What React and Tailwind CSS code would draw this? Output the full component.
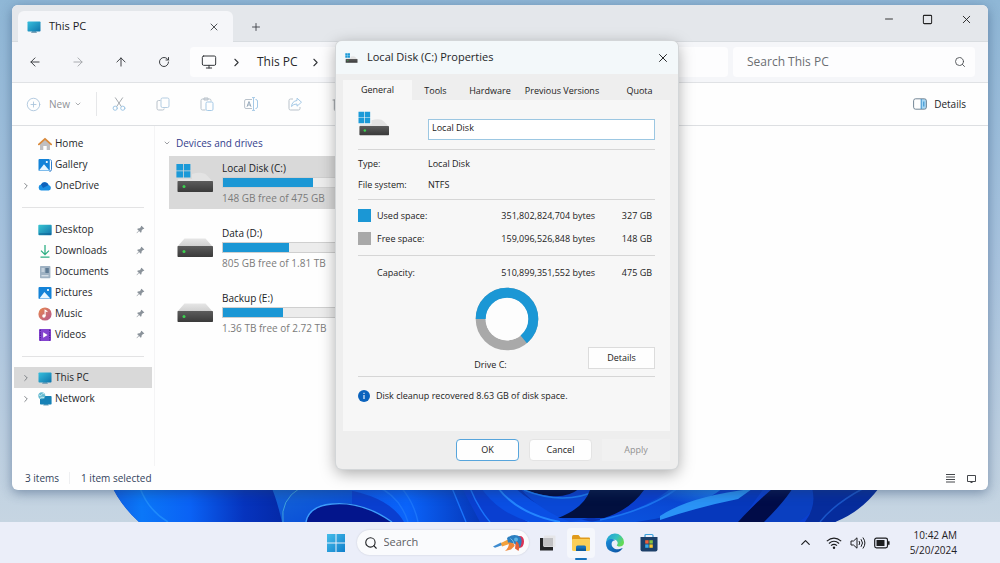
import React from "react";
import {
  ArrowLeft, ArrowRight, ArrowUp, RotateCw, Monitor, ChevronRight, ChevronDown, ChevronUp,
  Plus, X, Minus, Square, Search, CirclePlus, Trash2,
} from "lucide-react";

/* ---------- icons ---------- */

function PcIcon({ className }) {
  return (
    <svg viewBox="0 0 14 14" className={className} aria-hidden="true">
      <defs>
        <linearGradient id="pc" x1="0" y1="0" x2="1" y2="1">
          <stop offset="0" stopColor="#37bfdd" />
          <stop offset="1" stopColor="#0e74ab" />
        </linearGradient>
      </defs>
      <path d="M5 11h4l1 2H4z" fill="#7fa3b8" />
      <rect x="0.5" y="1.5" width="13" height="10" rx="0.8" fill="url(#pc)" />
    </svg>
  );
}

function HomeIcon({ className }) {
  return (
    <svg viewBox="0 0 14 14" className={className} aria-hidden="true">
      <path d="M2 6.5 7 2.4l5 4.1V13H8.7V9H5.3v4H2z" fill="#c0bfc1" />
      <path d="M0.9 7.4 7 1.8l6.1 5.6" fill="none" stroke="#d98a3c" strokeWidth="1.8" strokeLinejoin="round" strokeLinecap="round" />
    </svg>
  );
}

function PictureIcon({ className, stacked }) {
  return (
    <svg viewBox="0 0 14 14" className={className} aria-hidden="true">
      {stacked && <path d="M12.4 1.6q1.1.4 1.1 1.9v7.8q0 2-2 2.200" fill="none" stroke="#1c6fc4" strokeWidth="0.9" />}
      <rect x="0.5" y="1" width={stacked ? 11.3 : 13} height="12" rx="1" fill="#1483d8" />
      <path d={stacked ? "M1 12.6 6 6.3l5.3 6.3z" : "M1.4 12.6 6.4 6l6 6.6z"} fill="#e8f6ff" />
      <circle cx={stacked ? 8.8 : 10} cy="4" r="1.1" fill="#fff" />
    </svg>
  );
}

function CloudIcon({ className }) {
  return (
    <svg viewBox="0 0 14 14" className={className} aria-hidden="true">
      <path d="M3.4 11.6A3.1 3.1 0 0 1 3 5.5 4.2 4.2 0 0 1 10.6 6a2.9 2.9 0 0 1 .3 5.6z" fill="#1a8fe3" />
      <path d="M3 5.5A4.2 4.2 0 0 1 10.6 6L5 9z" fill="#0f62bb" />
    </svg>
  );
}

function DesktopIcon({ className }) {
  return (
    <svg viewBox="0 0 14 14" className={className} aria-hidden="true">
      <defs>
        <linearGradient id="desk" x1="0" y1="0" x2="1" y2="1">
          <stop offset="0" stopColor="#38c6d2" />
          <stop offset="1" stopColor="#1272ab" />
        </linearGradient>
      </defs>
      <rect x="0.3" y="1.8" width="13.4" height="10.4" rx="0.9" fill="url(#desk)" />
      <path d="M1 11h12" stroke="#0b5788" strokeWidth="0.8" />
    </svg>
  );
}

function DownloadIcon({ className }) {
  return (
    <svg viewBox="0 0 14 14" className={className} fill="none" stroke="#2eaf84" strokeWidth="1.3" aria-hidden="true">
      <path d="M7 1v9.3M3 6.6l4 4 4-4M2.5 13.2h9" />
    </svg>
  );
}

function DocIcon({ className }) {
  return (
    <svg viewBox="0 0 14 14" className={className} aria-hidden="true">
      <rect x="2" y="1" width="10.4" height="12.2" rx="0.8" fill="#9fb2c3" />
      <path d="M3.5 4h3M3.5 6h3M3.5 10.8h7" stroke="#f3f7fa" strokeWidth="0.9" />
      <rect x="7.4" y="3" width="3.4" height="5" fill="#5f7b94" />
    </svg>
  );
}

function MusicIcon({ className }) {
  return (
    <svg viewBox="0 0 14 14" className={className} aria-hidden="true">
      <defs>
        <linearGradient id="music" x1="0" y1="0" x2="1" y2="1">
          <stop offset="0" stopColor="#e8894c" />
          <stop offset="1" stopColor="#b55690" />
        </linearGradient>
      </defs>
      <circle cx="7" cy="7" r="6.6" fill="url(#music)" />
      <circle cx="5.9" cy="9" r="1.7" fill="#fff" />
      <path d="M7.1 9V3.2l2.3 1.5" fill="none" stroke="#fff" strokeWidth="1.1" />
    </svg>
  );
}

function VideoIcon({ className }) {
  return (
    <svg viewBox="0 0 14 14" className={className} aria-hidden="true">
      <rect x="1" y="1" width="12" height="12" rx="1" fill="#8443cf" />
      <path d="M2.4 1.8v10.8M11.6 1.8v10.8" stroke="#4d1f96" strokeWidth="1.2" strokeDasharray="1.3 1.1" />
      <path d="M5.2 4.2 9.6 7l-4.4 2.8z" fill="#fff" />
    </svg>
  );
}

function NetworkIcon({ className }) {
  return (
    <svg viewBox="0 0 14 14" className={className} aria-hidden="true">
      <path d="M6 12h4l.8 1.6H5.2z" fill="#6fa0b8" />
      <rect x="2" y="4" width="11.6" height="8.6" rx="0.8" fill="#1681b6" />
      <circle cx="3.8" cy="3.8" r="3.5" fill="#63b9cf" />
      <path d="M1 3q2 1.6 2.8-.4T6.6 2M2 6.4q1.6-2 4-.9" stroke="#d6f1f6" strokeWidth="0.9" fill="none" />
    </svg>
  );
}

function PinIcon({ className }) {
  return (
    <svg viewBox="0 0 10 10" className={className} aria-hidden="true">
      <path d="M6.1.8 9.3 4l-1 .5-.5-.1-1.6 1.6-.1 1.9-.8.7-1.9-1.9L1 9.2l-.4-.4L3 6.2 1.3 4.6l.7-.8 2-.1 1.5-1.6-.1-.6z" fill="#8b939b" />
    </svg>
  );
}

function WindowsLogo({ className }) {
  return (
    <svg viewBox="0 0 20 20" className={className} aria-hidden="true">
      <defs>
        <linearGradient id="win" x1="0" y1="0" x2="1" y2="1">
          <stop offset="0" stopColor="#45bdea" />
          <stop offset="1" stopColor="#0f7fcb" />
        </linearGradient>
      </defs>
      <path d="M1 1h8.5v8.5H1zM10.5 1H19v8.5h-8.5zM1 10.5h8.5V19H1zM10.5 10.5H19V19h-8.5z" fill="url(#win)" />
    </svg>
  );
}

function DriveIcon({ className, system }) {
  return (
    <svg viewBox="0 0 38 30" className={className} aria-hidden="true">
      <defs>
        <linearGradient id="lid" x1="0" y1="0" x2="0" y2="1">
          <stop offset="0" stopColor="#e6e6e6" />
          <stop offset="1" stopColor="#cfcfcf" />
        </linearGradient>
        <linearGradient id="box" x1="0" y1="0" x2="0" y2="1">
          <stop offset="0" stopColor="#5c5c5c" />
          <stop offset="1" stopColor="#3a3a3a" />
        </linearGradient>
      </defs>
      {system
        ? <path d="M16 11q11-3 15 1.500l5.500 6H2V16h14z" fill="#e3e3e3" />
        : <path d="M8.5 10.500h21l7 8h-35z" fill="url(#lid)" />}
      <rect x="1.5" y="18" width="35.5" height="11" rx="0.8" fill="url(#box)" />
      <circle cx="8" cy="23.4" r="1.500" fill="#3bd14f" />
      {system && <path d="M0.4 1h6.6v6.4H.4zM7.8 1h6.6v6.4H7.8zM.4 8.2H7v6.4H.4zM7.8 8.2h6.6v6.4H7.8z" fill="#1b9ad8" />}
    </svg>
  );
}

const duo = "h-[14px] w-[14px]";

function CutIcon() {
  return (
    <svg viewBox="0 0 14 14" className={duo} fill="none" strokeWidth="1" strokeLinecap="round" aria-hidden="true">
      <path d="M3.400.800 9.400 9.600M10.600.800 4.600 9.600" stroke="#a4a9ae" />
      <circle cx="3.200" cy="11.200" r="2.100" stroke="#9fc6e4" />
      <circle cx="10.800" cy="11.200" r="2.100" stroke="#9fc6e4" />
    </svg>
  );
}

function CopyIcon() {
  return (
    <svg viewBox="0 0 14 14" className={duo} fill="none" strokeWidth="1" aria-hidden="true">
      <path d="M4.5 3.5H2.6Q1 3.5 1 5v6.4Q1 13 2.6 13h4Q8.200 13 8.200 11.500" stroke="#b9c2cb" />
      <rect x="5" y="1" width="8" height="9.500" rx="1.5" stroke="#b4cde2" />
    </svg>
  );
}

function PasteIcon() {
  return (
    <svg viewBox="0 0 14 14" className={duo} fill="none" strokeWidth="1" aria-hidden="true">
      <path d="M5.500 13H2.500Q1 13 1 11.500V3.500Q1 2 2.500 2H9.500Q11 2 11 3.500V4.500M4 1h4v2H4z" stroke="#b9c2cb" />
      <rect x="6" y="5" width="7" height="8.500" rx="1.300" stroke="#a5c9e6" />
    </svg>
  );
}

function RenameIcon() {
  return (
    <svg viewBox="0 0 14 14" className={duo} fill="none" strokeWidth="1" aria-hidden="true">
      <path d="M8 2.500H2Q.600 2.500.600 4v6q0 1.500 1.400 1.500h6" stroke="#b9c2cb" />
      <path d="M3 9.800 5 4.500l2 5.300M3.700 8h2.600" stroke="#98aabb" />
      <path d="M9.500 1v12M8 .600h3M8 13.400h3M11.500 2.500q2 0 2 1.500v6q0 1.500-2 1.500" stroke="#a5c9e6" />
    </svg>
  );
}

function ShareIcon() {
  return (
    <svg viewBox="0 0 14 14" className={duo} fill="none" strokeWidth="1" strokeLinejoin="round" aria-hidden="true">
      <path d="M5 2H2.500Q1 2 1 3.500v8Q1 13 2.500 13h8q1.500 0 1.500-1.500V10" stroke="#b9c2cb" />
      <path d="M9 1.200 13.500 5.200 9 9.200V7Q5.500 6.800 3.500 9.500 4 4.200 9 3.500z" stroke="#a5c9e6" />
    </svg>
  );
}

function PaneIcon() {
  return (
    <svg viewBox="0 0 14 12" className="h-3 w-[14px]" aria-hidden="true">
      <path d="M8.500 1H11.500Q13.500 1 13.500 3v6q0 2-2 2h-3z" fill="#a9d8f4" />
      <rect x="0.600" y="0.800" width="12.800" height="10.400" rx="2" fill="none" stroke="#64798a" strokeWidth="0.900" />
      <path d="M8.200 1v10M10.800 3.500v5" stroke="#2c8ccc" strokeWidth="1" />
    </svg>
  );
}

function FishIcon() {
  return (
    <svg viewBox="0 0 34 18" className="h-[18px] w-[34px] shrink-0" aria-hidden="true">
      <path d="M1 12.500 9 8.500l1.500 2.500L3 13.800z" fill="#3d8bd0" />
      <path d="M9 9 18 4.500l2 4.500-10 3.500z" fill="#f2a13c" />
      <path d="M24 2.500q8-2.500 8 5 0 6-5 6.500z" fill="#dd3355" />
      <path d="M15 4Q22-1.500 28.500 3q2.500 4-.500 10.500L22 9.500l-6-1z" fill="#2b7fc0" />
      <path d="M17 8.500q6 0 5.500 3.500L19 15.500l-6 1.500q4-3 4-8.500z" fill="#f0883a" />
      <path d="M24 7q5 3 2.500 10L23 14.500z" fill="#e5623a" />
      <circle cx="24" cy="5.500" r="2" fill="#5db4e4" />
      <path d="M18.500 4.500q3 2 3.500 5" fill="none" stroke="#8bcdf0" strokeWidth="0.800" />
    </svg>
  );
}

function TaskViewIcon() {
  return (
    <svg viewBox="0 0 18 18" className="h-[18px] w-[18px]" aria-hidden="true">
      <rect x="6" y="1.500" width="11.500" height="11.500" rx="0.600" fill="#e6e6e9" />
      <path d="M2 4h4v9h9v3.500H2z" fill="#222326" />
      <rect x="5" y="4" width="10" height="8.500" fill="#c0c0c3" />
    </svg>
  );
}

function FolderIcon() {
  return (
    <svg viewBox="0 0 20 18" className="h-[18px] w-5" aria-hidden="true">
      <path d="M1 3q0-2 1.500-2h5l2 2.500H18q1 0 1 1.200V9H1z" fill="#e09b1c" />
      <path d="M1 6Q1 5 2 5h16q1 0 1 1v9.500q0 1.500-1.500 1.500h-15Q1 17 1 15.500z" fill="#fbcf57" />
      <path d="M5 17v-4q0-1.500 1.500-1.500h7Q15 11.500 15 13v4z" fill="#1772bd" />
      <path d="M5 14.500h10V17H5z" fill="#0e5c9d" />
    </svg>
  );
}

function EdgeIcon() {
  return (
    <svg viewBox="0 0 20 20" className="h-5 w-5" aria-hidden="true">
      <defs>
        <linearGradient id="edgeTop" x1="0" y1="0" x2="1" y2="0.500">
          <stop offset="0" stopColor="#1f9bdc" />
          <stop offset="0.600" stopColor="#35c1c0" />
          <stop offset="1" stopColor="#62d957" />
        </linearGradient>
        <linearGradient id="edgeLow" x1="0" y1="0" x2="1" y2="1">
          <stop offset="0" stopColor="#1b8fdc" />
          <stop offset="1" stopColor="#0c4f9e" />
        </linearGradient>
      </defs>
      <path d="M1 10a9 9 0 0 1 18-.800c0 3-2 4.300-4.300 4.300-2 0-2.900-.700-2.900-1.300 0-.600.900-.700.900-2.300 0-1.900-1.800-3.500-4.300-3.500C4.500 6.400 1.500 8 1 10z" fill="url(#edgeTop)" />
      <path d="M1 10c0-2.500 3-4.300 6-4 1.500.200 2.400.700 3 1.300C7.500 7.600 6.600 9.300 6.600 11c0 3.500 3.400 5.800 6.800 5.300 1.600-.200 2.800-.800 3.700-1.300.300-.100.500.100.300.400A9 9 0 0 1 1 10z" fill="url(#edgeLow)" />
    </svg>
  );
}

function StoreIcon() {
  return (
    <svg viewBox="0 0 20 20" className="h-5 w-5" aria-hidden="true">
      <path d="M6 4V2.500Q6 1.500 7 1.500h6q1 0 1 1V4" fill="none" stroke="#3aa0dc" strokeWidth="1.200" />
      <path d="M1.500 4h17v12.500q0 2-2 2h-13q-2 0-2-2z" fill="#1c3f69" />
      <path d="M6.200 7.200h3.400v3.400H6.200z" fill="#f0623a" />
      <path d="M10.400 7.200h3.400v3.400h-3.400z" fill="#86c441" />
      <path d="M6.200 11.400h3.400v3.400H6.200z" fill="#36a9e8" />
      <path d="M10.400 11.400h3.400v3.400h-3.400z" fill="#f8c62f" />
    </svg>
  );
}

function WifiIcon() {
  return (
    <svg viewBox="0 0 16 14" className="h-[14px] w-4" fill="none" stroke="#1c1d20" strokeWidth="1.100" aria-hidden="true">
      <path d="M.800 5.200q7.200-6.200 14.400 0M2.900 7.500q5.100-4.400 10.200 0M5 9.700q3-2.600 6 0" />
      <circle cx="8" cy="11.700" r="1.200" fill="#1c1d20" stroke="none" />
    </svg>
  );
}

function SpeakerIcon() {
  return (
    <svg viewBox="0 0 16 14" className="h-[14px] w-4" fill="none" stroke="#1c1d20" strokeWidth="1" strokeLinejoin="round" aria-hidden="true">
      <path d="M1 5v4h2.500L7 12.200V1.800L3.500 5zM9 5q1.500 2 0 4M11 3.200q3 3.800 0 7.600M12.900 1.500q4 5.500 0 11" />
    </svg>
  );
}

function BatteryIcon() {
  return (
    <svg viewBox="0 0 16 12" className="h-3 w-4" aria-hidden="true">
      <rect x="0.700" y="1.200" width="12.800" height="9.600" rx="1.800" fill="none" stroke="#1c1d20" strokeWidth="1.200" />
      <rect x="2.500" y="3" width="8" height="6" fill="#1c1d20" />
      <path d="M14 4.200h1.600v3.600H14z" fill="#1c1d20" />
    </svg>
  );
}

function Wallpaper() {
  return (
    <svg viewBox="0 0 1000 42" preserveAspectRatio="none" className="absolute inset-x-0 bottom-0 h-[42px] w-full" aria-hidden="true">
      <defs>
        <linearGradient id="b1" x1="0" x2="1" y1="0" y2="0">
          <stop offset="0" stopColor="#0f5be0" />
          <stop offset="0.180" stopColor="#0b77f8" />
          <stop offset="0.450" stopColor="#0a62f5" />
          <stop offset="0.750" stopColor="#0634be" />
          <stop offset="1" stopColor="#0427a4" />
        </linearGradient>
        <linearGradient id="b2" x1="0" x2="1" y1="0" y2="1">
          <stop offset="0" stopColor="#1668d8" />
          <stop offset="1" stopColor="#0648d8" />
        </linearGradient>
        <linearGradient id="b3" x1="0" x2="1" y1="0" y2="0">
          <stop offset="0" stopColor="#0b50e4" />
          <stop offset="0.500" stopColor="#0a64fb" />
          <stop offset="1" stopColor="#0637b8" />
        </linearGradient>
        <linearGradient id="b4" x1="0" x2="1" y1="1" y2="0">
          <stop offset="0" stopColor="#0a55e0" />
          <stop offset="0.600" stopColor="#0a48d4" />
          <stop offset="1" stopColor="#2393fa" />
        </linearGradient>
      </defs>
      <path d="M109 0q10 24 30 42h696q25-12 50-42z" fill="#0a3fd0" />
      <path d="M109 0q10 24 30 42h150V0z" fill="url(#b1)" />
      <path d="M140 8q8 22 28 34" fill="none" stroke="#2b9bff" strokeWidth="1.500" opacity="0.600" />
      <path d="M271 6q6 14 11 36h70V6z" fill="url(#b2)" />
      <path d="M300 8q-20 12-17 34" fill="none" stroke="#5fd0dc" strokeWidth="1" opacity="0.600" />
      <path d="M306 42q3-14 24-18 30-5 62 18z" fill="#03158c" />
      <path d="M306 42q3-16 26-18 30-3 60 18" fill="none" stroke="#3d9dfb" strokeWidth="1.400" />
      <path d="M334 8q54 6 70 34h76L462 8z" fill="url(#b3)" />
      <path d="M376 6q24 10 32 36M400 6q14 16 18 36M452 8l14 34M470 8q8 20 20 34M490 8q16 22 40 34" fill="none" stroke="#1a74fb" strokeWidth="1.400" />
      <path d="M480 6h44q26 28 96 36h-90q-34-10-50-36z" fill="#0a4fe4" />
      <path d="M498 8q20 26 62 34" fill="none" stroke="#2486ff" strokeWidth="2" />
      <path d="M518 8q30 26 82 33" fill="none" stroke="#0733b4" strokeWidth="4" />
      <path d="M520 8h60q-12 10-30 8-16-2-30-8z" fill="#020a3c" />
      <path d="M520 8q36 16 64 6l20-8h36q-20 28-70 36-34-14-50-34z" fill="#0a48d6" />
      <path d="M524 10q40 16 74 0" fill="none" stroke="#1c7cf4" strokeWidth="1.500" />
      <path d="M590 10h54q-14 20-40 28h-46q26-10 32-28z" fill="#02103f" />
      <path d="M590 42q50-8 84-36h52q-34 26-82 36z" fill="url(#b4)" />
      <path d="M600 40q48-10 78-32" fill="none" stroke="#1b74f0" strokeWidth="1.600" />
      <path d="M636 42q46-6 76-22 20-12 52-12l-24 34z" fill="#0638bc" />
      <path d="M660 36q30-20 92-27l-14 10q-40 8-78 21z" fill="#2a93f6" />
      <path d="M738 42q22-24 38-36h24q0 22-20 36z" fill="#010c48" />
      <path d="M764 42q22-22 30-36 22 2 22 12 0 14-18 24z" fill="#0a3fc0" />
      <path d="M812 8h67q-18 24-44 34h-30q12-16 7-34z" fill="#062c9c" />
      <path d="M820 42q14-18 44-34" fill="none" stroke="#1a55c8" strokeWidth="1.500" />
    </svg>
  );
}

/* ---------- file explorer ---------- */

const iconBox = "h-[14px] w-[14px] shrink-0";

function NavItem({ icon, label, expand, pin, selected }) {
  return (
    <li className={selected ? "bg-[#d9d9d9]" : ""}>
      <a href="#" className="flex h-[21px] items-center pl-[7px] text-[10px] text-[#25272a]">
        <span className="flex w-[17px] shrink-0 items-center">
          {expand && <ChevronRight className="h-[10px] w-[10px] text-[#6b6f75]" strokeWidth={2} />}
        </span>
        <span className="flex w-[17px] shrink-0">{icon}</span>
        <span>{label}</span>
        {pin && <PinIcon className="mr-[7px] ml-auto h-[9px] w-[9px]" />}
      </a>
    </li>
  );
}

function Sidebar() {
  return (
    <nav aria-label="Folders" className="w-[143px] shrink-0 border-r border-[#f4f4f5] pt-[7px] pr-[2px] pl-[2px]">
      <ul>
        <NavItem icon={<HomeIcon className={iconBox} />} label="Home" />
        <NavItem icon={<PictureIcon stacked className={iconBox} />} label="Gallery" />
        <NavItem icon={<CloudIcon className={iconBox} />} label="OneDrive" expand />
      </ul>
      <hr className="mx-2 my-[11px] border-[#e3e3e4]" />
      <ul>
        <NavItem icon={<DesktopIcon className={iconBox} />} label="Desktop" pin />
        <NavItem icon={<DownloadIcon className={iconBox} />} label="Downloads" pin />
        <NavItem icon={<DocIcon className={iconBox} />} label="Documents" pin />
        <NavItem icon={<PictureIcon className={iconBox} />} label="Pictures" pin />
        <NavItem icon={<MusicIcon className={iconBox} />} label="Music" pin />
        <NavItem icon={<VideoIcon className={iconBox} />} label="Videos" pin />
      </ul>
      <hr className="mx-2 mt-[11px] mb-[10px] border-[#e3e3e4]" />
      <ul>
        <NavItem icon={<PcIcon className={iconBox} />} label="This PC" expand selected />
        <NavItem icon={<NetworkIcon className={iconBox} />} label="Network" expand />
      </ul>
    </nav>
  );
}

const drives = [
  { name: "Local Disk (C:)", free: "148 GB free of 475 GB", used: 69, system: true },
  { name: "Data (D:)", free: "805 GB free of 1.81 TB", used: 51 },
  { name: "Backup (E:)", free: "1.36 TB free of 2.72 TB", used: 46 },
];

function Drive({ name, free, used, system }) {
  return (
    <li className={`flex h-[53px] w-[200px] gap-2 pt-[5px] pl-[7px] ${system ? "bg-[#d9d9d9]" : ""}`}>
      <DriveIcon system={system} className="mt-[2px] h-[30px] w-[38px] shrink-0" />
      <div className="flex-1">
        <p className="text-[10px] leading-[14px] text-[#202225]">{name}</p>
        <div className="mt-[2px] h-[11px] w-[132px] border border-[#cfcfcf] bg-[#ececec]">
          <div className="h-full bg-[#1b97d5]" style={{ width: `${used}%` }} />
        </div>
        <p className="mt-[3px] text-[10px] leading-[14px] text-[#7b7b7b]">{free}</p>
      </div>
    </li>
  );
}

function IconButton({ label, children, className = "" }) {
  return (
    <button type="button" aria-label={label} className={`flex items-center justify-center ${className}`}>
      {children}
    </button>
  );
}

function Explorer() {
  const nav = "h-6 w-[43px]";
  const cmd = "h-6 w-11";
  return (
    <section aria-label="File Explorer" className="flex flex-1 flex-col overflow-hidden rounded-md bg-[#fefefe] shadow-[0_3px_12px_rgba(30,60,100,0.45)]">
      <header className="flex h-[37px] shrink-0 items-end border-b border-[#d8dce0] bg-[#e4e7eb] pl-[6px]">
        <div className="-mb-px flex h-[31px] w-[215px] items-center rounded-t-md bg-[#f5f6f9] pr-[11px] pl-[9px]">
          <PcIcon className="h-[14px] w-[14px]" />
          <span className="ml-2 text-[11px] text-[#1b1c1f]">This PC</span>
          <IconButton label="Close tab" className="ml-auto h-4 w-4">
            <X className="h-3 w-3 text-[#33363b]" strokeWidth={1.700} />
          </IconButton>
        </div>
        <IconButton label="New tab" className="mb-[6px] ml-[15px] h-4 w-4">
          <Plus className="h-3 w-3 text-[#3c4046]" strokeWidth={1.800} />
        </IconButton>
        <div className="mb-[14px] ml-auto flex pr-[2px]">
          <IconButton label="Minimize" className="h-4 w-[39px]"><Minus className="h-3 w-3 text-[#222]" strokeWidth={1.800} /></IconButton>
          <IconButton label="Maximize" className="h-4 w-[39px]"><Square className="h-[11px] w-[11px] text-[#222]" strokeWidth={2.200} /></IconButton>
          <IconButton label="Close" className="h-4 w-[39px]"><X className="h-[13px] w-[13px] text-[#222]" strokeWidth={1.700} /></IconButton>
        </div>
      </header>

      <div className="flex h-[41px] shrink-0 items-center border-b border-[#e0e2e5] bg-[#f5f6f9] pr-[13px] pl-px">
        <IconButton label="Back" className={nav}><ArrowLeft className="h-[14px] w-[14px] text-[#34373b]" strokeWidth={1.600} /></IconButton>
        <IconButton label="Forward" className={nav}><ArrowRight className="h-[14px] w-[14px] text-[#a3a6aa]" strokeWidth={1.600} /></IconButton>
        <IconButton label="Up" className={nav}><ArrowUp className="h-[14px] w-[14px] text-[#34373b]" strokeWidth={1.600} /></IconButton>
        <IconButton label="Refresh" className={nav}><RotateCw className="h-3 w-3 text-[#34373b]" strokeWidth={1.900} /></IconButton>
        <div className="ml-[5px] flex h-[30px] flex-1 items-center rounded-sm bg-[#fdfdfe] pl-[11px]">
          <Monitor className="h-4 w-4 text-[#34373b]" strokeWidth={1.500} />
          <ChevronRight className="mr-[14px] ml-[13px] h-[13px] w-[13px] text-[#34373b]" strokeWidth={2} />
          <span className="text-[12px] text-[#26282b]">This PC</span>
          <ChevronRight className="ml-[11px] h-[13px] w-[13px] text-[#34373b]" strokeWidth={2} />
        </div>
        <label className="ml-[5px] flex h-[30px] w-[242px] items-center rounded-sm bg-[#fdfdfe] pr-[9px] pl-[14px]">
          <input aria-label="Search This PC" placeholder="Search This PC" className="w-full bg-transparent text-[12px] text-[#333] outline-none placeholder:text-[#6b6e72]" />
          <Search className="h-3 w-3 shrink-0 text-[#4d5054]" strokeWidth={1.800} />
        </label>
      </div>

      <div className="flex h-[43px] shrink-0 items-center border-b border-[#dddfe2] pr-[22px] pl-[14px]">
        <button type="button" className="flex items-center text-[10px] text-[#8f9296]">
          <CirclePlus className="h-[15px] w-[15px] text-[#a9c4dc]" strokeWidth={1.400} />
          <span className="mr-1 ml-2">New</span>
          <ChevronDown className="h-2 w-2" strokeWidth={2.200} />
        </button>
        <span className="ml-[14px] h-6 w-px bg-[#e6e7e9]" />
        <IconButton label="Cut" className={cmd}><CutIcon /></IconButton>
        <IconButton label="Copy" className={cmd}><CopyIcon /></IconButton>
        <IconButton label="Paste" className={cmd}><PasteIcon /></IconButton>
        <IconButton label="Rename" className={cmd}><RenameIcon /></IconButton>
        <IconButton label="Share" className={cmd}><ShareIcon /></IconButton>
        <IconButton label="Delete" className={cmd}><Trash2 className="h-4 w-4 text-[#9da1a6]" strokeWidth={1.500} /></IconButton>
        <button type="button" className="ml-auto flex items-center gap-[7px] text-[10px] text-[#222427]">
          <PaneIcon />
          Details
        </button>
      </div>

      <div className="flex flex-1">
        <Sidebar />
        <main className="flex-1 pt-[9px] pl-2">
          <h2 className="flex items-center gap-[5px] text-[10px] leading-4 text-[#33408c]">
            <ChevronDown className="h-2 w-2 text-[#6c7075]" strokeWidth={2} />
            Devices and drives
          </h2>
          <ul className="mt-[5px] ml-[6px] flex flex-col gap-3">
            {drives.map((d) => <Drive key={d.name} {...d} />)}
          </ul>
        </main>
      </div>

      <footer className="flex h-6 shrink-0 items-center pr-3 pl-[13px] text-[10px] text-[#33435c]">
        <span>3 items</span>
        <span className="mr-[11px] ml-[10px] h-3 w-px bg-[#eeeff1]" />
        <span>1 item selected</span>
        <div className="ml-auto flex items-center gap-3">
          <IconButton label="Details view">
            <svg viewBox="0 0 9 9" className="h-[9px] w-[9px]" stroke="#44474b" aria-hidden="true"><path d="M0 .500h9M0 3h9M0 5.500h9M0 8h9" /></svg>
          </IconButton>
          <IconButton label="Large icons view">
            <svg viewBox="0 0 9 9" className="h-[9px] w-[9px]" fill="none" stroke="#44474b" aria-hidden="true"><path d="M.500 1.500h8v6h-8zM3.500 8.500h2" /></svg>
          </IconButton>
        </div>
      </footer>
    </section>
  );
}

/* ---------- properties dialog ---------- */

const tabs = [
  { label: "Tools", cls: "w-[47px]" },
  { label: "Hardware", cls: "w-[62px]" },
  { label: "Previous Versions", cls: "w-[82px]" },
  { label: "Quota", cls: "flex-1 pl-[6px]" },
];

function UsageDonut() {
  return (
    <svg viewBox="0 0 64 64" className="h-16 w-16" role="img" aria-label="Used 327 GB, free 148 GB">
      <circle cx="32" cy="32" r="26.300" fill="none" stroke="#a9a9a9" strokeWidth="10" />
      <circle cx="32" cy="32" r="21.500" fill="#fdfdfd" />
      <circle cx="32" cy="32" r="26.300" fill="none" stroke="#1b97d5" strokeWidth="10" pathLength="100" strokeDasharray="64 36" transform="rotate(180 32 32)" />
    </svg>
  );
}

function SpaceRow({ swatch, label, bytes, size }) {
  return (
    <tr className="h-[23px]">
      <td className="w-[19px] p-0">{swatch && <span className={`block h-[13px] w-[13px] ${swatch}`} />}</td>
      <th scope="row" className="p-0 text-left font-normal">{label}</th>
      <td className="p-0 text-right">{bytes}</td>
      <td className="w-[60px] p-0 pr-[3px] text-right">{size}</td>
    </tr>
  );
}

function PropertiesDialog() {
  const btn = "h-[22px] border bg-[#fefefe]";
  return (
    <div role="dialog" aria-label="Local Disk (C:) Properties" className="absolute top-[41px] left-[336px] w-[342px] overflow-hidden rounded-md bg-[#eeeeee] text-[9px] text-[#222] shadow-[0_4px_16px_rgba(0,0,0,0.35)] ring-1 ring-[#d3d6d8]">
      <header className="flex h-[33px] items-center bg-[#f3f8fa] pr-2 pl-[9px]">
        <DriveIcon system className="h-[10px] w-[13px]" />
        <h1 className="ml-[9px] text-[11px] text-[#242628]">Local Disk (C:) Properties</h1>
        <IconButton label="Close" className="ml-auto h-[14px] w-[14px]"><X className="h-[14px] w-[14px] text-[#26282b]" strokeWidth={1.700} /></IconButton>
      </header>

      <div className="pt-[6px] pr-2 pb-2 pl-[7px]">
        <div role="tablist" className="flex h-5 items-end">
          <button type="button" role="tab" aria-selected="true" className="h-5 w-[69px] bg-[#f7f7f7]">General</button>
          {tabs.map((t) => (
            <button key={t.label} type="button" role="tab" aria-selected="false" className={`h-[18px] ${t.cls}`}>{t.label}</button>
          ))}
        </div>

        <div role="tabpanel" className="bg-[#f7f7f7] px-[15px] pb-[28px]">
          <div className="flex h-[50px] border-b border-[#d6d6d6]">
            <DriveIcon system className="mt-[11px] h-[25px] w-8" />
            <input aria-label="Volume label" defaultValue="Local Disk" className="mt-[19px] ml-auto h-[21px] w-[227px] border border-[#9cc7e2] bg-white pb-1 pl-[3px] outline-none" />
          </div>

          <dl className="grid h-[50px] grid-cols-[70px_1fr] content-center gap-y-[5px] border-b border-[#d6d6d6] leading-4">
            <dt>Type:</dt><dd>Local Disk</dd>
            <dt>File system:</dt><dd>NTFS</dd>
          </dl>

          <div className="h-[56px] border-b border-[#d6d6d6] pt-1">
            <table className="w-full">
              <tbody>
                <SpaceRow swatch="bg-[#1b97d5]" label="Used space:" bytes="351,802,824,704 bytes" size="327 GB" />
                <SpaceRow swatch="bg-[#a9a9a9]" label="Free space:" bytes="159,096,526,848 bytes" size="148 GB" />
              </tbody>
            </table>
          </div>

          <div className="h-[121px] border-b border-[#d6d6d6] pt-[5px]">
            <table className="w-full">
              <tbody>
                <SpaceRow label="Capacity:" bytes="510,899,351,552 bytes" size="475 GB" />
              </tbody>
            </table>
            <div className="grid grid-cols-[1fr_64px_1fr] pt-[3px]">
              <span />
              <div className="flex flex-col items-center">
                <UsageDonut />
                <p className="mt-[6px] mr-8 leading-4 whitespace-nowrap">Drive C:</p>
              </div>
              <button type="button" className={`${btn} mt-auto mb-1 w-[67px] justify-self-end border-[#dcdcdc]`}>Details</button>
            </div>
          </div>

          <div className="flex h-[26px] items-end gap-[6px] leading-[14px]">
            <svg viewBox="0 0 12 12" className="mb-px h-3 w-3 shrink-0" aria-hidden="true">
              <circle cx="6" cy="6" r="6" fill="#0b63bd" />
              <path d="M6 5v4M6 2.800v1.200" stroke="#fff" strokeWidth="1.100" />
            </svg>
            <p>Disk cleanup recovered 8.63 GB of disk space.</p>
          </div>
        </div>

        <div className="flex justify-end gap-[10px] pt-2">
          <button type="button" className={`${btn} w-[63px] rounded-sm border-[#57a5dc]`}>OK</button>
          <button type="button" className={`${btn} w-[63px] rounded-sm border-[#e4e4e4]`}>Cancel</button>
          <button type="button" disabled className="h-[22px] w-[68px] bg-[#f1f1f1] text-[#929292]">Apply</button>
        </div>
      </div>
    </div>
  );
}

/* ---------- taskbar ---------- */

function Taskbar() {
  return (
    <footer className="grid h-[41px] shrink-0 grid-cols-[1fr_auto_1fr] items-center bg-[#ebeef9] px-[43px]">
      <span />
      <div className="mr-3 flex items-center gap-[11px]">
        <IconButton label="Start"><WindowsLogo className="h-5 w-5" /></IconButton>
        <label className="flex h-[25px] w-[172px] items-center rounded-full bg-[#fafbfd] pr-[3px] pl-[7px] shadow-[0_0_2px_rgba(0,0,0,0.15)]">
          <Search className="h-[14px] w-[14px] shrink-0 text-[#1f2124]" strokeWidth={1.900} />
          <input aria-label="Search" placeholder="Search" className="ml-[6px] w-full min-w-0 bg-transparent text-[11px] outline-none placeholder:text-[#5d6064]" />
          <FishIcon />
        </label>
        <div className="-ml-[7px] flex items-center gap-[6px]">
          <IconButton label="Task view" className="h-7 w-7"><TaskViewIcon /></IconButton>
          <IconButton label="File Explorer" className="relative h-[30px] w-7 rounded-sm bg-[#f5f7fc]">
            <FolderIcon />
            <span className="absolute bottom-[-2px] left-1/2 h-[2px] w-3 -translate-x-1/2 rounded-full bg-[#1672bc]" />
          </IconButton>
          <IconButton label="Edge" className="h-7 w-7"><EdgeIcon /></IconButton>
          <IconButton label="Store" className="h-7 w-7"><StoreIcon /></IconButton>
        </div>
      </div>
      <div className="flex items-center gap-2 justify-self-end">
        <IconButton label="Show hidden icons" className="mr-[5px]"><ChevronUp className="h-[15px] w-[15px] text-[#1c1d20]" strokeWidth={1.900} /></IconButton>
        <WifiIcon />
        <SpeakerIcon />
        <BatteryIcon />
        <div className="ml-3 text-right text-[10px] leading-[15px] text-[#1f2124]">
          <p>10:42 AM</p>
          <p>5/20/2024</p>
        </div>
      </div>
    </footer>
  );
}

export default function App() {
  return (
    <div className="flex min-h-screen flex-col bg-[#c5d6e6] font-['Open_Sans','Noto_Sans',sans-serif]">
      <div className="relative flex flex-1 flex-col bg-linear-to-b from-[#8fb7d6] via-[#a9c4df] to-[#c6d5e2] px-3 pt-[5px] pb-8">
        <Wallpaper />
        <div className="relative flex flex-1 flex-col">
          <Explorer />
        </div>
        <PropertiesDialog />
      </div>
      <Taskbar />
    </div>
  );
}
